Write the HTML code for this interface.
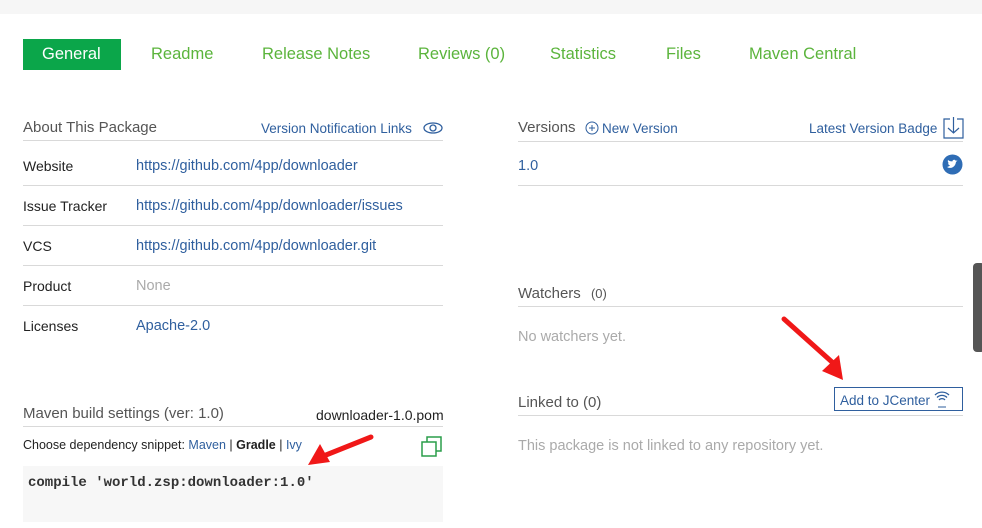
<!DOCTYPE html>
<html><head><style>
body{margin:0;width:982px;height:528px;background:#fff;font-family:"Liberation Sans",sans-serif;position:relative;overflow:hidden}
.a{position:absolute;white-space:nowrap;line-height:18px}
.top{left:0;top:0;width:982px;height:14px;background:#f6f6f6}
.tab{font-size:16.5px;color:#5bb43c;top:45px}
.h{font-size:15px;color:#555}
.l{font-size:14px;color:#222}
.v{font-size:14.5px;color:#2f5f9e}
.lk{font-size:13.5px;color:#2f5f9e}
.line{height:1px;background:#d9d9d9}
.g{font-size:14.5px;color:#aaa}
</style></head><body>
<div class="a top"></div>
<div class="a" style="left:23px;top:39px;width:98px;height:31px;background:#0ba64a"></div>
<div class="a tab" style="left:42px;color:#fff">General</div>
<div class="a tab" style="left:151px">Readme</div>
<div class="a tab" style="left:262px">Release Notes</div>
<div class="a tab" style="left:418px">Reviews (0)</div>
<div class="a tab" style="left:550px">Statistics</div>
<div class="a tab" style="left:666px">Files</div>
<div class="a tab" style="left:749px">Maven Central</div>

<div class="a h" style="left:23px;top:119px">About This Package</div>
<div class="a lk" style="left:261px;top:120px">Version Notification Links</div>
<svg class="a" style="left:423px;top:121px" width="20" height="14"><ellipse cx="10" cy="7" rx="9" ry="5" fill="none" stroke="#2f5f9e" stroke-width="1.3"/><circle cx="10" cy="7" r="3" fill="none" stroke="#2f5f9e" stroke-width="1.3"/></svg>
<div class="a line" style="left:23px;top:140px;width:420px"></div>
<div class="a l" style="left:23px;top:157px">Website</div><div class="a v" style="left:136px;top:157px">https://github.com/4pp/downloader</div>
<div class="a line" style="left:23px;top:185px;width:420px"></div>
<div class="a l" style="left:23px;top:197px">Issue Tracker</div><div class="a v" style="left:136px;top:197px">https://github.com/4pp/downloader/issues</div>
<div class="a line" style="left:23px;top:225px;width:420px"></div>
<div class="a l" style="left:23px;top:237px">VCS</div><div class="a v" style="left:136px;top:237px">https://github.com/4pp/downloader.git</div>
<div class="a line" style="left:23px;top:265px;width:420px"></div>
<div class="a l" style="left:23px;top:277px">Product</div><div class="a g" style="left:136px;top:277px">None</div>
<div class="a line" style="left:23px;top:305px;width:420px"></div>
<div class="a l" style="left:23px;top:317px">Licenses</div><div class="a v" style="left:136px;top:317px">Apache-2.0</div>

<div class="a h" style="left:23px;top:405px">Maven build settings (ver: 1.0)</div>
<div class="a l" style="left:316px;top:406px;font-size:14px">downloader-1.0.pom</div>
<div class="a line" style="left:23px;top:426px;width:420px"></div>
<div class="a" style="left:23px;top:436px;font-size:12.5px;color:#222">Choose dependency snippet: <span style="color:#2f5f9e">Maven</span> | <b>Gradle</b> | <span style="color:#2f5f9e">Ivy</span></div>
<svg class="a" style="left:421px;top:436px" width="22" height="22"><rect x="6" y="1" width="14" height="14" fill="#fff" stroke="#2a9d4a" stroke-width="1.5"/><rect x="1" y="6" width="14" height="14" fill="#fff" stroke="#2a9d4a" stroke-width="1.5"/></svg>
<div class="a" style="left:23px;top:466px;width:420px;height:56px;background:#f7f7f7"></div>
<div class="a" style="left:28px;top:474px;font-family:'Liberation Mono',monospace;font-size:14px;font-weight:bold;color:#333">compile 'world.zsp:downloader:1.0'</div>

<div class="a h" style="left:518px;top:119px">Versions</div>
<svg class="a" style="left:585px;top:121px" width="14" height="14"><circle cx="7" cy="7" r="6" fill="none" stroke="#2f5f9e"/><path d="M7 4v6M4 7h6" stroke="#2f5f9e"/></svg>
<div class="a lk" style="left:602px;top:120px">New Version</div>
<div class="a lk" style="left:809px;top:120px">Latest Version Badge</div>
<svg class="a" style="left:943px;top:117px" width="21" height="22"><path d="M7 2H1v19h19V2h-6" fill="none" stroke="#2f5f9e" stroke-width="1.2"/><path d="M10.5 0v16M5 11l5.5 5 5.5-5" fill="none" stroke="#2f5f9e" stroke-width="1.2"/></svg>
<div class="a line" style="left:518px;top:141px;width:445px"></div>
<div class="a v" style="left:518px;top:157px">1.0</div>
<svg class="a" style="left:942px;top:154px" width="21" height="21"><circle cx="10.5" cy="10.5" r="10" fill="#2f6db5"/><path d="M5 13c3 2 8 1 9-5l1.5-1.5-1.8.3c-.8-1.5-3-1.3-3.3.6C8 7.5 6.5 6.5 6 6c-.5 1.5 0 2.5 1 3.3-.7 0-1 0-1-.2 0 1 .8 2 2 2.3-.5 1-2 1.2-3 1.6z" fill="#fff"/></svg>
<div class="a line" style="left:518px;top:185px;width:445px"></div>
<div class="a h" style="left:518px;top:285px">Watchers <span style="font-size:13px;margin-left:6px">(0)</span></div>
<div class="a line" style="left:518px;top:306px;width:445px"></div>
<div class="a g" style="left:518px;top:328px">No watchers yet.</div>
<div class="a h" style="left:518px;top:394px">Linked to (0)</div>
<div class="a line" style="left:518px;top:415px;width:445px"></div>
<div class="a" style="left:834px;top:387px;width:127px;height:22px;border:1px solid #2f5f9e"></div>
<div class="a lk" style="left:840px;top:392px">Add to JCenter</div>
<svg class="a" style="left:933px;top:389px" width="18" height="20"><path d="M2 6a10 10 0 0 1 14 0M4 8.5a7 7 0 0 1 10 0M6 11a4 4 0 0 1 6 0" fill="none" stroke="#2f5f9e" stroke-width="1.3"/><path d="M5 18h8" stroke="#2f5f9e"/></svg>
<div class="a g" style="left:518px;top:437px">This package is not linked to any repository yet.</div>

<div class="a" style="left:973px;top:263px;width:12px;height:89px;background:#555;border-radius:4px"></div>

<svg class="a" style="left:0;top:0" width="982" height="528">
<path d="M784 319L832 362" stroke="#f01818" stroke-width="5" stroke-linecap="round"/>
<path d="M843 380L822 371L839 355Z" fill="#f01818"/>
<path d="M371 437L326 455" stroke="#f01818" stroke-width="5" stroke-linecap="round"/>
<path d="M308 465L320 444L330 462Z" fill="#f01818"/>
</svg>
</body></html>
